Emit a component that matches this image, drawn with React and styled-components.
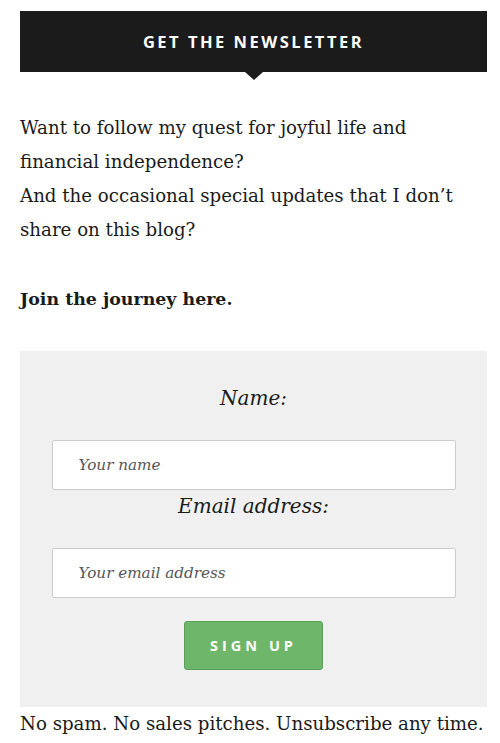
import styled, { createGlobalStyle } from 'styled-components';

const GlobalStyle = createGlobalStyle`
  html, body {
    margin: 0;
    padding: 0;
    background: #ffffff;
  }
  body {
    font-family: 'DejaVu Serif', serif;
    color: #1a1a1a;
  }
`

export default function App() {
  return (
    <>
      <GlobalStyle />
      <Widget>
        <Banner>
          <h2>Get the newsletter</h2>
        </Banner>

        <Intro>
          Want to follow my quest for joyful life and financial independence?
          <br />
          And the occasional special updates that I don’t share on this blog?
        </Intro>
        <Intro>
          <strong>Join the journey here.</strong>
        </Intro>

        <SignupForm onSubmit={e => e.preventDefault()}>
          <Label htmlFor="nl-name">Name:</Label>
          <Field id="nl-name" type="text" placeholder="Your name" />
          <Label htmlFor="nl-email">Email address:</Label>
          <Field id="nl-email" type="email" placeholder="Your email address" />
          <SubmitButton type="submit">Sign up</SubmitButton>
        </SignupForm>

        <Note>No spam. No sales pitches. Unsubscribe any time.</Note>
      </Widget>
    </>
  )
}

const Widget = styled.div`
    width: 467px;
    margin-left: 20px;
    padding-top: 11px;
`
const Banner = styled.div`
    position: relative;
    height: 61px;
    background: #1b1b1b;
    display: flex;
    align-items: center;
    justify-content: center;
    h2 {
        margin: 0;
        font-family: 'Open Sans', sans-serif;
        font-weight: 700;
        font-size: 16.5px;
        letter-spacing: 2.5px;
        text-transform: uppercase;
        color: #ffffff;
    }
    &::after {
        content: '';
        position: absolute;
        left: 50%;
        bottom: -8px;
        margin-left: -9px;
        border-left: 9px solid transparent;
        border-right: 9px solid transparent;
        border-top: 8px solid #1b1b1b;
    }
`
const Intro = styled.p`
    margin: 39px 0 35px;
    font-size: 18.2px;
    line-height: 34px;
    & + & {
        margin-top: 0;
    }
    strong {
        font-weight: 700;
        font-size: 17.4px;
    }
`
const SignupForm = styled.form`
    background: #f0f0f0;
    padding: 32px 31px 37px;
    display: flex;
    flex-direction: column;
    align-items: center;
`
const Label = styled.label`
    font-style: italic;
    font-size: 20px;
    line-height: 30px;
    margin-bottom: 27px;
`
const Field = styled.input`
    box-sizing: border-box;
    width: 404px;
    height: 50px;
    padding: 0 26px;
    border: 1px solid #cccccc;
    border-radius: 2px;
    background: #ffffff;
    font-family: 'DejaVu Serif', serif;
    font-style: italic;
    font-size: 15.2px;
    color: #333;
    margin-bottom: 1px;
    &::placeholder {
        color: #555555;
    }
`
const SubmitButton = styled.button`
    margin-top: 22px;
    width: 139px;
    height: 49px;
    background: #6db66a;
    border: 1px solid #5c9e59;
    border-radius: 3px;
    color: #ffffff;
    font-family: 'Open Sans', sans-serif;
    font-weight: 700;
    font-size: 14.5px;
    letter-spacing: 4px;
    text-transform: uppercase;
    cursor: pointer;
`
const Note = styled.p`
    margin: 0;
    font-size: 18.2px;
    line-height: 34px;
`
